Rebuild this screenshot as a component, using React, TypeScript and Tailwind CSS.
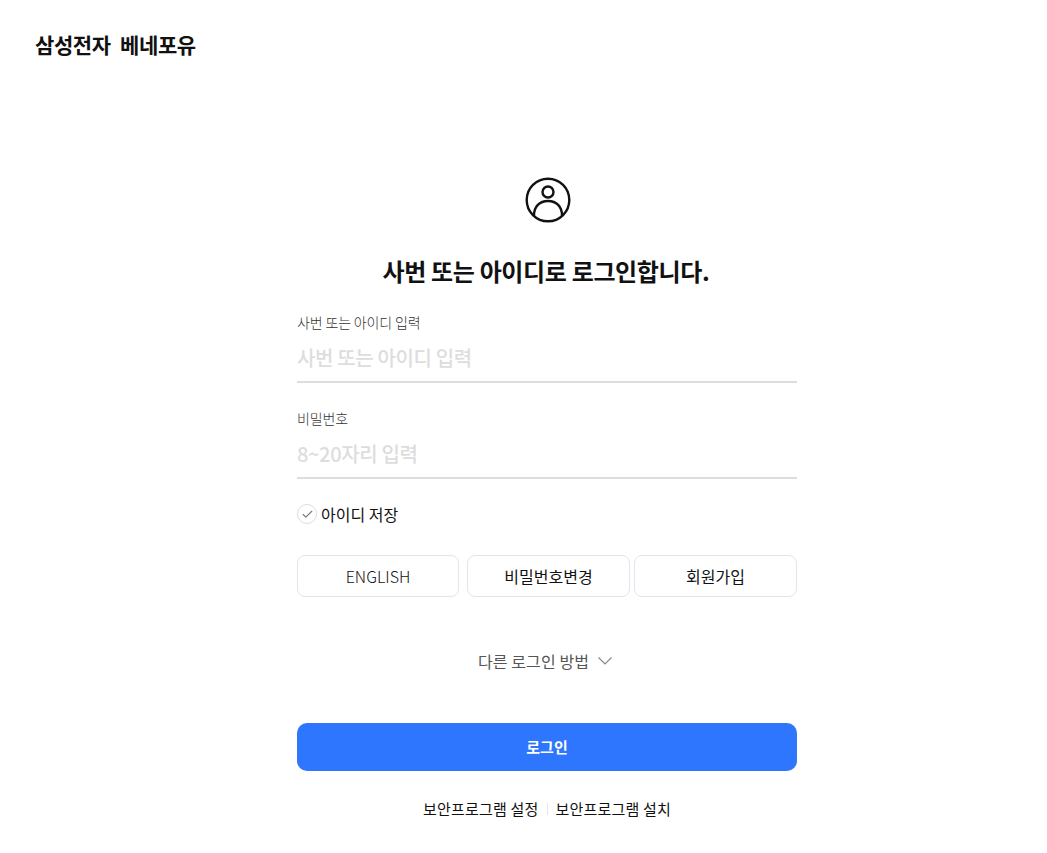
import React, { useState } from 'react';
import { Check } from 'lucide-react';

const font = "font-['Noto_Sans_CJK_KR','Noto_Sans',sans-serif]";

function Field({ label, placeholder, type = 'text' }: { label: string; placeholder: string; type?: string }) {
  return (
    <div className="flex flex-col">
      <label className="-mt-[2px] mb-[2px] h-[20px] text-[14px] font-light leading-[20px] tracking-[-0.15px] text-[#333]">{label}</label>
      <input
        type={type}
        placeholder={placeholder}
        className="h-[49px] border-b-2 border-[#ddd] pb-[1px] text-[20px] font-medium tracking-[-0.35px] outline-none placeholder:text-[#ddd]"
      />
    </div>
  );
}

export default function App() {
  const [saved, setSaved] = useState(false);

  return (
    <div className={`${font} min-h-[853px] bg-white text-black`}>
      <header className="pl-[35px] pt-[28px]">
        <h1 className="text-[21px] font-bold leading-[32px] tracking-[-0.4px] text-[#111] [word-spacing:5px]">삼성전자 베네포유</h1>
      </header>

      <main className="ml-[297px] flex w-[500px] flex-col pt-[117px]">
        <div className="flex justify-center">
          <svg className="ml-[1px]" width="46" height="46" viewBox="0 0 46 46" fill="none" stroke="#111" strokeWidth="2.4">
            <circle cx="23" cy="23" r="21.3" />
            <circle cx="23" cy="15" r="5.5" />
            <path d="M9 38.500c0-9 5.500-14.500 14-14.500s14 5.500 14 14.500" />
          </svg>
        </div>
        <h2 className="mt-[31px] pr-[2px] text-center text-[24px] font-bold leading-[34px] tracking-[-0.35px] text-[#111]">
          사번 또는 아이디로 로그인합니다.
        </h2>

        <div className="mt-[26px] flex flex-col gap-[27px]">
          <Field label="사번 또는 아이디 입력" placeholder="사번 또는 아이디 입력" />
          <Field label="비밀번호" placeholder="8~20자리 입력" type="password" />
        </div>

        <button type="button" onClick={() => setSaved(!saved)} className="mt-[25px] flex h-[20px] items-center gap-[4px]">
          <span className="flex h-[20px] w-[20px] items-center justify-center rounded-full border border-[#ddd]">
            <Check size={13} strokeWidth={2} className={saved ? 'text-[#2f76ff]' : 'text-[#777]'} />
          </span>
          <span className="text-[16px] leading-[20px] text-[#111]">아이디 저장</span>
        </button>

        <div className="mt-[31px] flex gap-[8px]">
          <button className="h-[42px] w-[162px] rounded-[8px] border border-[#e4e4ec] text-[16px] font-light text-[#111]">ENGLISH</button>
          <button className="h-[42px] w-[163px] rounded-[8px] border border-[#e4e4ec] text-[16px] text-[#111]">비밀번호변경</button>
          <button className="-ml-[4px] h-[42px] w-[163px] rounded-[8px] border border-[#e4e4ec] text-[16px] text-[#111]">회원가입</button>
        </div>

        <button type="button" className="mt-[52px] flex h-[24px] items-center justify-center gap-[9px] pr-[4px] text-[16px] tracking-[0.1px] text-[#555]">
          다른 로그인 방법
          <svg width="14" height="8" viewBox="0 0 14 8" fill="none" stroke="#888" strokeWidth="1.2">
            <path d="M0.5 0.5L7 7L13.500 0.5" />
          </svg>
        </button>

        <button className="mt-[50px] h-[48px] rounded-[10px] bg-[#2f76ff] text-[15px] font-bold text-white">로그인</button>

        <div className="mt-[27px] flex items-center justify-center text-[15px] leading-[22px] tracking-[0.2px] text-[#111]">
          <a>보안프로그램 설정</a>
          <span className="mx-[8px] h-[12px] w-px bg-[#e5e5e5]" />
          <a>보안프로그램 설치</a>
        </div>
      </main>
    </div>
  );
}
